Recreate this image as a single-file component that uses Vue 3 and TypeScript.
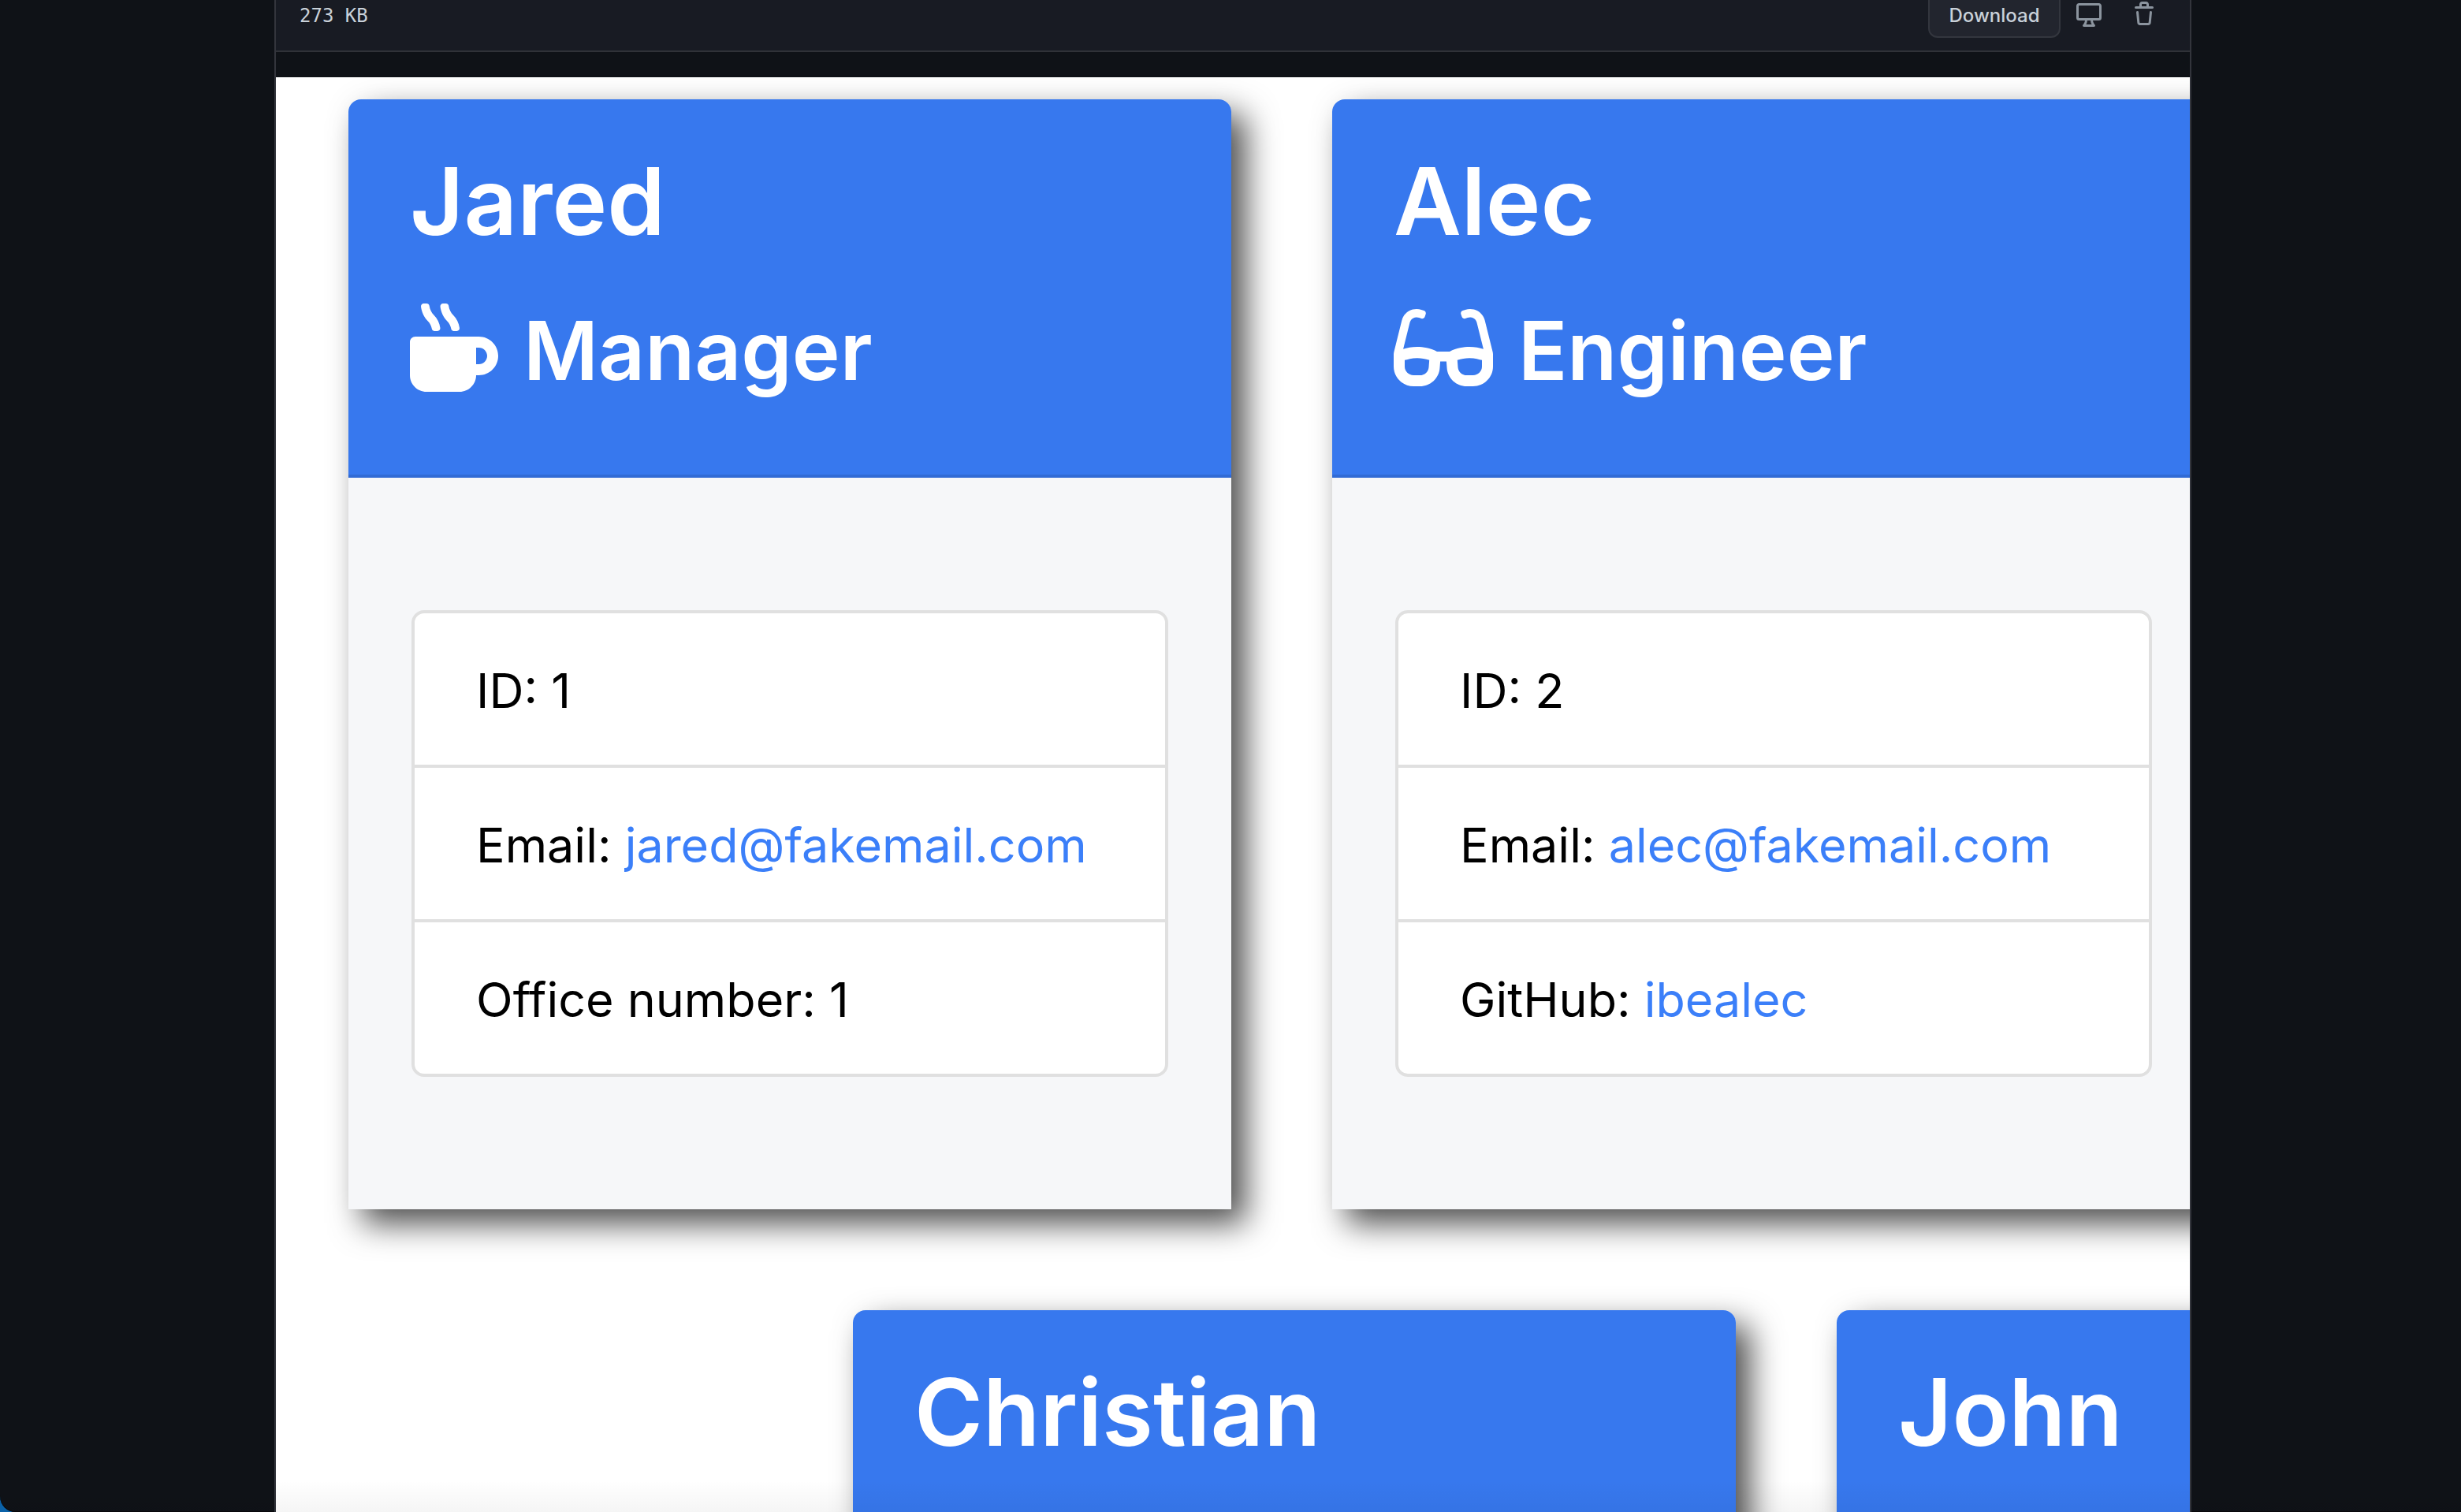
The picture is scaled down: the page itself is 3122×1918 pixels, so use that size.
<script setup lang="ts">
interface Detail {
  label: string
  value: string
  href?: string
}

interface Member {
  name: string
  role?: string
  icon?: 'mug' | 'glasses'
  details: Detail[]
}

const rows: Member[][] = [
  [
    {
      name: 'Jared',
      role: 'Manager',
      icon: 'mug',
      details: [
        { label: 'ID', value: '1' },
        { label: 'Email', value: 'jared@fakemail.com', href: 'mailto:jared@fakemail.com' },
        { label: 'Office number', value: '1' },
      ],
    },
    {
      name: 'Alec',
      role: 'Engineer',
      icon: 'glasses',
      details: [
        { label: 'ID', value: '2' },
        { label: 'Email', value: 'alec@fakemail.com', href: 'mailto:alec@fakemail.com' },
        { label: 'GitHub', value: 'ibealec', href: 'https://github.com/ibealec' },
      ],
    },
  ],
  [
    { name: 'Christian', details: [] },
    { name: 'John', details: [] },
  ],
]
</script>

<template>
  <div class="window">
    <main class="viewer">
      <header class="toolbar">
        <span class="size">273 KB</span>
        <div class="actions">
          <button type="button" class="download">Download</button>
          <button type="button" class="icon-button" aria-label="Open in desktop">
            <svg viewBox="0 0 16 16" aria-hidden="true">
              <path d="M14.25 1c.966 0 1.75.784 1.75 1.75v7.5A1.75 1.75 0 0 1 14.25 12h-3.727c.099 1.041.52 1.872 1.292 2.757A.752.752 0 0 1 11.25 16h-6.5a.75.75 0 0 1-.565-1.243c.772-.885 1.192-1.716 1.292-2.757H1.75A1.75 1.75 0 0 1 0 10.25v-7.5C0 1.784.784 1 1.75 1ZM1.75 2.5a.25.25 0 0 0-.25.25v7.5c0 .138.112.25.25.25h12.5a.25.25 0 0 0 .25-.25v-7.5a.25.25 0 0 0-.25-.25ZM9.018 12H6.982a5.72 5.72 0 0 1-.765 2.5h3.566a5.72 5.72 0 0 1-.765-2.5Z" />
            </svg>
          </button>
          <button type="button" class="icon-button" aria-label="Delete file">
            <svg viewBox="0 0 16 16" aria-hidden="true">
              <path d="M11 1.75V3h2.25a.75.75 0 0 1 0 1.5H2.75a.75.75 0 0 1 0-1.5H5V1.75C5 .784 5.784 0 6.75 0h2.5C10.216 0 11 .784 11 1.75ZM4.496 6.675l.66 6.6a.25.25 0 0 0 .249.225h5.19a.25.25 0 0 0 .249-.225l.66-6.6a.75.75 0 0 1 1.492.149l-.66 6.6A1.748 1.748 0 0 1 10.595 15h-5.19a1.75 1.75 0 0 1-1.741-1.575l-.66-6.6a.75.75 0 1 1 1.492-.15ZM6.5 1.75V3h3V1.75a.25.25 0 0 0-.25-.25h-2.5a.25.25 0 0 0-.25.25Z" />
            </svg>
          </button>
        </div>
      </header>

      <div class="board">
        <div v-for="(row, index) in rows" :key="index" class="row">
          <article v-for="member in row" :key="member.name" class="card">
            <div class="card-header">
              <h2 class="name">{{ member.name }}</h2>
              <h3 v-if="member.role" class="role">
                <svg v-if="member.icon === 'mug'" class="mug" viewBox="0 0 512 512" aria-hidden="true">
                  <path d="M127.1 146.5c1.3 7.7 8 13.5 16 13.5h16.5c9.8 0 17.6-8.5 16.3-18-3.8-28.2-16.4-54.2-36.6-74.7-14.4-14.7-23.6-33.3-26.4-53.5C111.8 5.9 105 0 96.8 0H80.4C70.6 0 63 8.5 64.1 18c3.9 31.9 18 61.3 40.6 84.4 12 12.2 19.7 27.5 22.4 44.1zm112 0c1.3 7.7 8 13.5 16 13.5h16.5c9.8 0 17.6-8.5 16.3-18-3.8-28.2-16.4-54.2-36.6-74.7-14.4-14.7-23.6-33.3-26.4-53.5C223.8 5.9 217 0 208.8 0h-16.4c-9.8 0-17.5 8.5-16.3 18 3.9 31.9 18 61.3 40.6 84.4 12 12.2 19.7 27.5 22.4 44.1zM400 192H32c-17.7 0-32 14.3-32 32v192c0 53 43 96 96 96h192c53 0 96-43 96-96h16c61.8 0 112-50.2 112-112s-50.2-112-112-112zm0 160h-16v-96h16c26.5 0 48 21.5 48 48s-21.5 48-48 48z" />
                </svg>
                <svg v-else class="glasses" viewBox="0 0 576 512" aria-hidden="true">
                  <path d="M574.1 280.37L528.75 98.66c-5.91-23.7-21.59-44.05-43-55.81-21.44-11.73-46.97-14.11-70.19-6.33l-15.25 5.08c-8.39 2.79-12.92 11.86-10.12 20.24l5.06 15.18c2.79 8.38 11.85 12.91 20.23 10.12l13.18-4.39c10.87-3.62 23-3.57 33.16 1.73 10.29 5.37 17.57 14.56 20.37 25.82l38.46 153.82c-22.19-6.81-49.79-12.46-81.2-12.46-34.77 0-73.98 7.02-114.85 26.74h-73.18c-40.87-19.74-80.08-26.75-114.86-26.75-31.42 0-59.02 5.65-81.21 12.46l38.46-153.83c2.79-11.25 10.09-20.45 20.38-25.81 10.16-5.3 22.28-5.35 33.15-1.73l13.17 4.39c8.38 2.79 17.44-1.74 20.23-10.12l5.06-15.18c2.8-8.38-1.73-17.45-10.12-20.24l-15.25-5.08c-23.22-7.78-48.75-5.41-70.19 6.33-21.41 11.77-37.09 32.11-43 55.8L1.9 280.37A64.218 64.218 0 0 0 0 295.86v70.25C0 429.01 51.58 480 115.2 480h37.12c60.28 0 110.37-45.94 114.88-105.37l2.93-38.63h35.75l2.93 38.63C313.31 434.06 363.4 480 423.68 480h37.12c63.62 0 115.2-50.99 115.2-113.88v-70.25c0-5.23-.64-10.43-1.9-15.5zM203.4 369.88c-1.98 26.12-24.4 46.12-51.08 46.12H115.2C86.97 416 64 393.62 64 366.11v-37.54c15.17-4.5 39.48-12.57 73.07-12.57 23.92 0 47.26 4.05 69.5 12zM512 366.11c0 27.51-22.97 49.89-51.2 49.89h-37.12c-26.68 0-49.1-20-51.08-46.12L369.43 328c22.24-7.95 45.58-12 69.5-12 33.59 0 57.9 8.07 73.07 12.57z" />
                </svg>
                <span class="role-name">{{ member.role }}</span>
              </h3>
            </div>
            <div v-if="member.details.length" class="card-body">
              <ul class="details">
                <li v-for="detail in member.details" :key="detail.label">
                  {{ detail.label }}:
                  <a v-if="detail.href" :href="detail.href">{{ detail.value }}</a>
                  <template v-else>{{ detail.value }}</template>
                </li>
              </ul>
            </div>
          </article>
        </div>
      </div>
    </main>
    <div class="edge-shade" aria-hidden="true"></div>
  </div>
</template>

<style>
body {
  margin: 0;
  background: #0b62a8;
}
</style>

<style scoped>
.window {
  position: relative;
  box-sizing: border-box;
  display: flex;
  height: 100vh;
  padding-left: 6px;
  overflow: hidden;
  background: #0f1217;
  border-radius: 0 0 0 20px;
  box-shadow: inset 0 -1px 0 #08080a;
  font-family: Inter, 'Liberation Sans', sans-serif;
}

.viewer {
  box-sizing: border-box;
  display: flex;
  flex-direction: column;
  width: 100%;
  max-width: 2432px;
  margin: 0 auto;
  border: solid #33353c;
  border-width: 0 2px;
  overflow: hidden;
}

/* The toolbar is partly scrolled out of view. */
.toolbar {
  display: flex;
  flex: none;
  align-items: center;
  justify-content: space-between;
  height: 92px;
  margin-top: -28px;
  padding: 0 26px 0 30px;
  background: #181b23;
  border-bottom: 2px solid #303238;
}

.size {
  padding-top: 4px;
  color: #c9d1d9;
  font: 24px/36px 'DejaVu Sans Mono', monospace;
}

.actions {
  display: flex;
  align-items: center;
}

.download {
  box-sizing: border-box;
  height: 60px;
  width: 168px;
  margin-right: 4px;
  padding: 4px 0 0;
  color: #c9d1d9;
  background: #22252e;
  border: 2px solid #33363e;
  border-radius: 12px;
  font: 500 24px/36px Inter, 'Liberation Sans', sans-serif;
}

.icon-button {
  display: flex;
  padding: 16px;
  background: none;
  border: 0;
}

.icon-button + .icon-button {
  margin-left: 6px;
}

.icon-button svg {
  width: 32px;
  height: 32px;
  fill: #8b949e;
}

.board {
  display: flex;
  flex: 1 0 auto;
  flex-direction: column;
  gap: 128px;
  margin-top: 32px;
  padding: 28px 92px 0;
  background: #fff;
}

.row {
  display: flex;
  gap: 128px;
}

.row:nth-child(even) {
  padding-left: 640px;
}

.card {
  flex: none;
  width: 1120px;
  background: #f6f7f9;
  border-radius: 16px 16px 0 0;
  box-shadow: 18px 18px 40px rgba(0, 0, 0, 0.7);
}

.card-header {
  box-sizing: border-box;
  min-height: 480px;
  padding: 53px 78px 0;
  color: #fff;
  background: #3778ee;
  border-bottom: 4px solid #316bd5;
  border-radius: 16px 16px 0 0;
}

.name,
.role {
  margin: 0;
  font-weight: 600;
}

.name {
  font-size: 118px;
  line-height: 152px;
}

.role {
  display: flex;
  gap: 32px;
  align-items: center;
  margin-top: 39px;
  font-size: 103px;
  line-height: 134px;
}

.role-name {
  padding-top: 8px;
}

.role svg {
  flex: none;
  height: 112px;
  fill: currentColor;
}

.mug {
  width: 112px;
}

.glasses {
  width: 126px;
}

.card-body {
  padding: 168px 80px;
}

.details {
  margin: 0;
  padding: 0;
  list-style: none;
  background: #fff;
  border: 4px solid #e0e0e0;
  border-radius: 16px;
}

.details li {
  padding: 50px 78px 46px;
  color: #000;
  font-size: 61px;
  line-height: 96px;
  white-space: nowrap;
}

.details li + li {
  border-top: 4px solid #e0e0e0;
}

.details a {
  color: #3b7ff9;
  text-decoration: none;
}

/* Soft shade along the lower edge of the window. */
.edge-shade {
  position: absolute;
  right: 0;
  bottom: 0;
  left: 0;
  height: 40px;
  background: linear-gradient(rgba(0, 0, 0, 0), rgba(0, 0, 0, 0.04));
  pointer-events: none;
}
</style>
